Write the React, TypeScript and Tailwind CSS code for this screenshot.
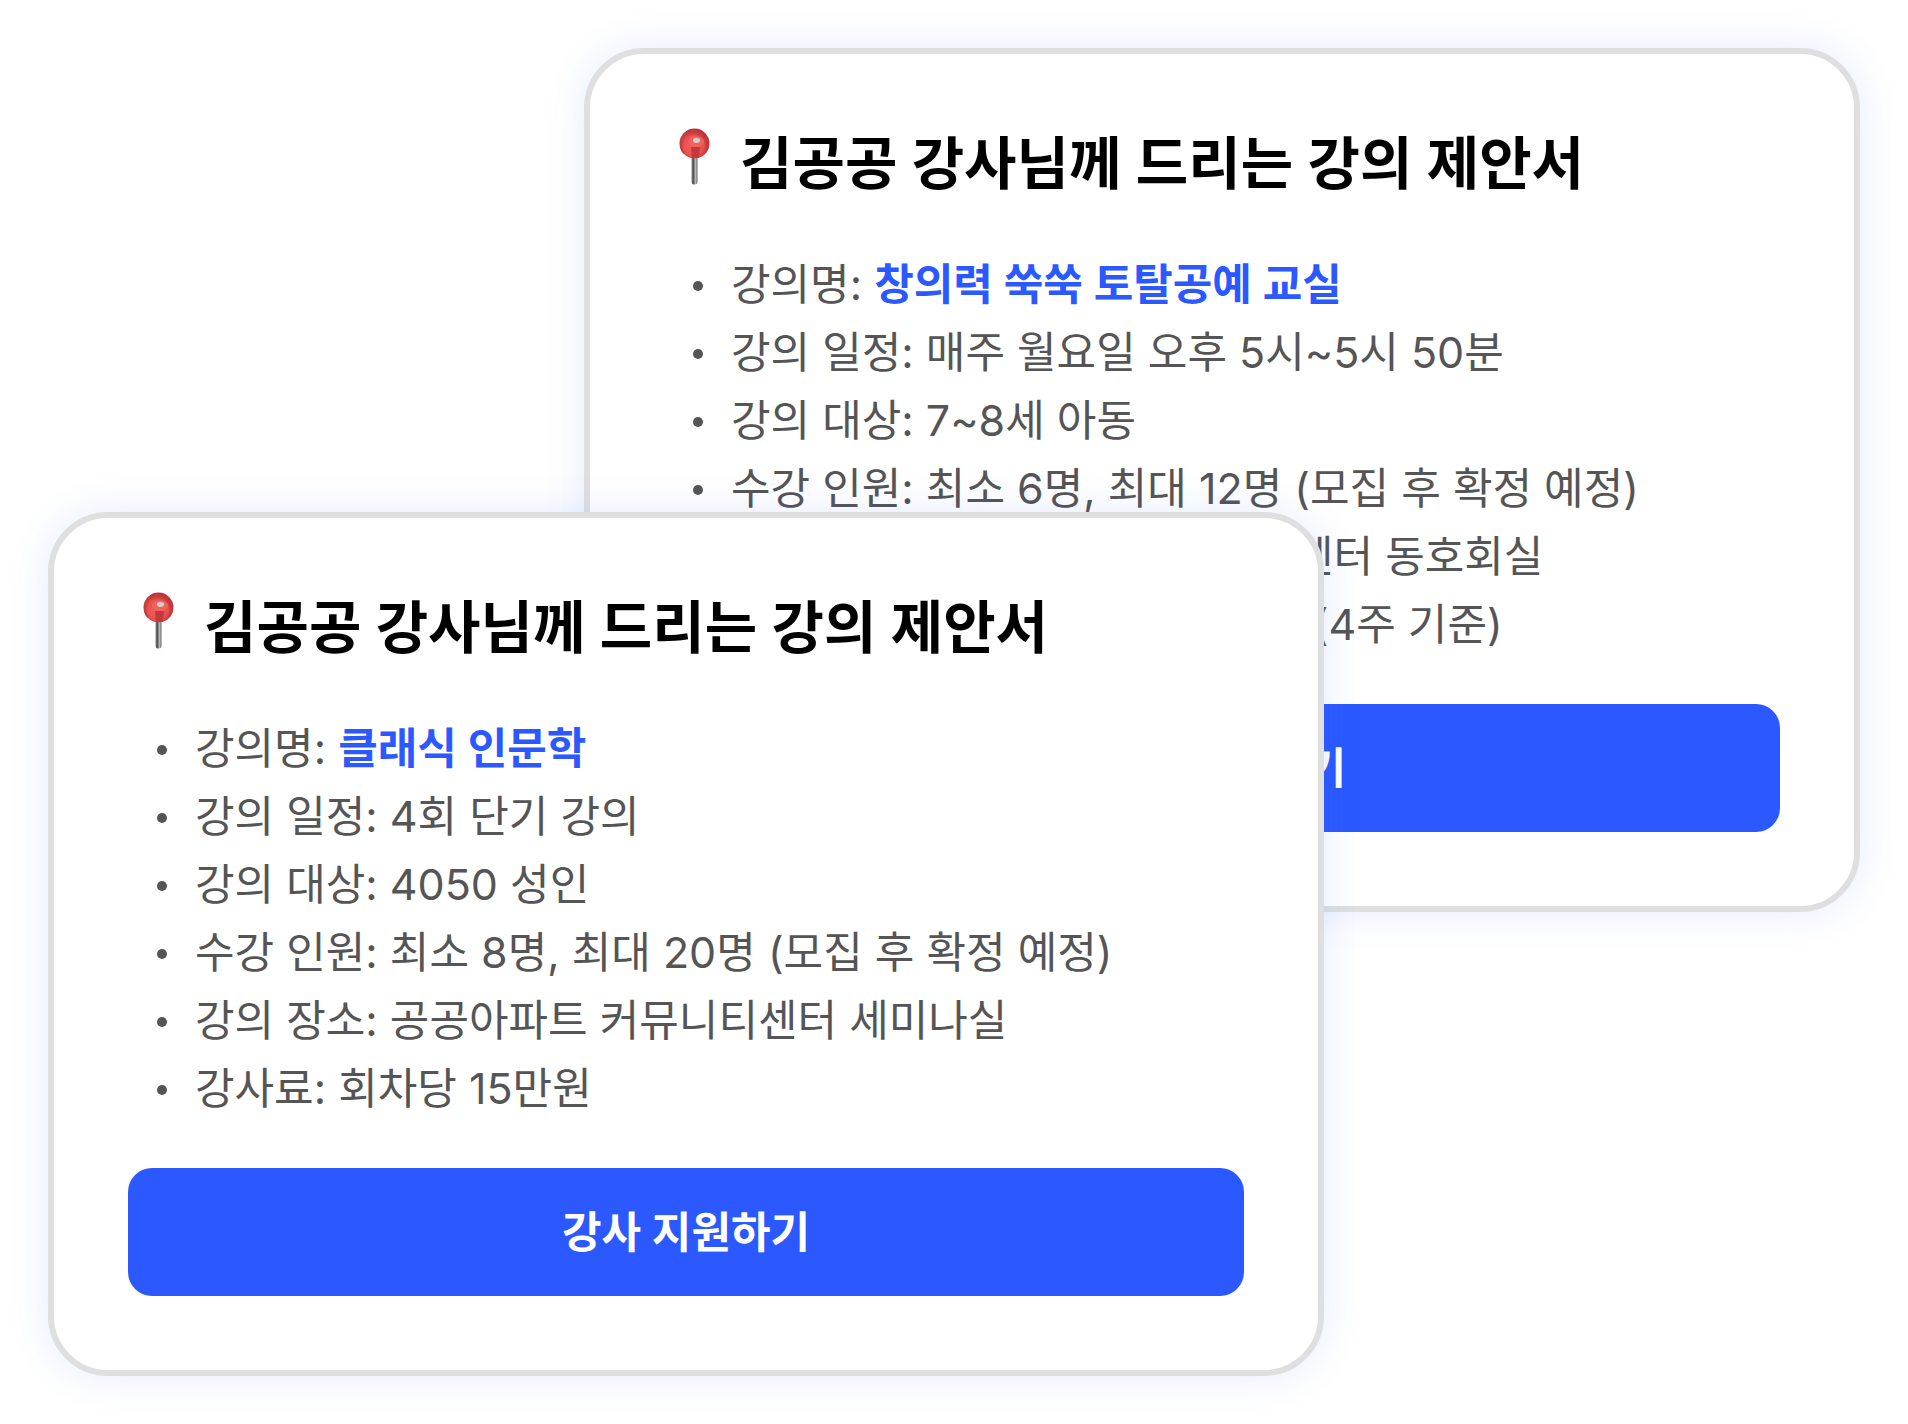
type Detail = {
  label: string;
  value: string;
  highlight?: boolean;
};

type Proposal = {
  title: string;
  details: Detail[];
};

const proposals: Proposal[] = [
  {
    title: '김공공 강사님께 드리는 강의 제안서',
    details: [
      { label: '강의명', value: '창의력 쑥쑥 토탈공예 교실', highlight: true },
      { label: '강의 일정', value: '매주 월요일 오후 5시~5시 50분' },
      { label: '강의 대상', value: '7~8세 아동' },
      { label: '수강 인원', value: '최소 6명, 최대 12명 (모집 후 확정 예정)' },
      { label: '강의 장소', value: '공공아파트 커뮤니티센터 동호회실' },
      { label: '강사료', value: '회차당 3만원/월 12만원 (4주 기준)' },
    ],
  },
  {
    title: '김공공 강사님께 드리는 강의 제안서',
    details: [
      { label: '강의명', value: '클래식 인문학', highlight: true },
      { label: '강의 일정', value: '4회 단기 강의' },
      { label: '강의 대상', value: '4050 성인' },
      { label: '수강 인원', value: '최소 8명, 최대 20명 (모집 후 확정 예정)' },
      { label: '강의 장소', value: '공공아파트 커뮤니티센터 세미나실' },
      { label: '강사료', value: '회차당 15만원' },
    ],
  },
];

function PinIcon() {
  return (
    <svg viewBox="0 0 60 72" className="h-[72px] w-[60px] shrink-0" aria-hidden="true">
      <defs>
        <linearGradient id="needle" x1="0" x2="1" y1="0" y2="0">
          <stop offset="0" stopColor="#8c8c8c" />
          <stop offset="0.3" stopColor="#4a4a4a" />
          <stop offset="0.65" stopColor="#b9b9b9" />
          <stop offset="1" stopColor="#6a6a6a" />
        </linearGradient>
        <radialGradient id="ball" cx="0.46" cy="0.58" r="0.56">
          <stop offset="0" stopColor="#f2605a" />
          <stop offset="0.6" stopColor="#e9504e" />
          <stop offset="0.8" stopColor="#c93c3e" />
          <stop offset="1" stopColor="#b83438" />
        </radialGradient>
      </defs>
      <rect x="27.5" y="27" width="6" height="29.5" rx="2.5" fill="url(#needle)" />
      <circle cx="30.5" cy="15.5" r="15" fill="url(#ball)" />
      <path d="M18 12c-2 4-1 10 2 13" fill="none" stroke="#c93c3e" strokeWidth="2" />
      <path d="M27 19h9l-1 11h-7z" fill="#c4393b" />
      <ellipse cx="32" cy="13.5" rx="8" ry="5.5" fill="#f0625c" />
      <ellipse cx="32.5" cy="12.5" rx="3.5" ry="2.4" fill="#d6cfcd" />
    </svg>
  );
}

function ProposalCard({ title, details }: Proposal) {
  return (
    <article className="rounded-[60px] border-6 border-[#dfdfdf] bg-white p-[74px] shadow-[0_0_40px_rgba(43,100,255,0.12)]">
      <div className="flex items-center gap-4">
        <PinIcon />
        <h2 className="text-[57px] leading-[72px] font-semibold text-black">{title}</h2>
      </div>

      <ul className="mt-[50px] pl-[29px] text-[43px] leading-[68px] text-[#555555]">
        {details.map((detail) => (
          <li key={detail.label} className="flex items-center gap-7">
            <span className="mt-1 size-[10px] shrink-0 rounded-full bg-[#555555]" />
            <p>
              {detail.label}:{' '}
              {detail.highlight ? (
                <strong className="font-semibold text-[#2b59ff]">{detail.value}</strong>
              ) : (
                detail.value
              )}
            </p>
          </li>
        ))}
      </ul>

      <button
        type="button"
        className="mt-[46px] h-32 w-full rounded-3xl bg-[#2b59ff] text-[43px] font-semibold text-white"
      >
        강사 지원하기
      </button>
    </article>
  );
}

export default function App() {
  return (
    <main className="bg-white p-12 font-['Inter','Noto_Sans_CJK_KR',sans-serif]">
      <div className="ml-[536px]">
        <ProposalCard {...proposals[0]} />
      </div>
      {/* Second card overlaps the lower left of the first */}
      <div className="relative -mt-[400px] mr-[536px]">
        <ProposalCard {...proposals[1]} />
      </div>
    </main>
  );
}
